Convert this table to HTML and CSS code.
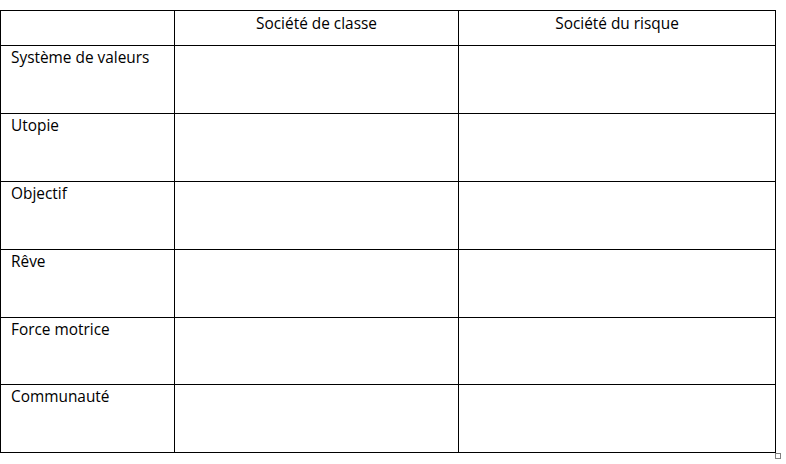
FILE: index.html
```html
<!DOCTYPE html>
<html lang="fr">
<head>
<meta charset="utf-8">
<link rel="stylesheet" href="styles.css">
</head>
<body>
<div class="page">
  <table class="grid">
    <colgroup>
      <col class="c1"><col class="c2"><col class="c3">
    </colgroup>
    <tr class="head">
      <td></td>
      <td class="center">Société de classe</td>
      <td class="center">Société du risque</td>
    </tr>
    <tr><td>Système de valeurs</td><td></td><td></td></tr>
    <tr><td>Utopie</td><td></td><td></td></tr>
    <tr><td>Objectif</td><td></td><td></td></tr>
    <tr><td>Rêve</td><td></td><td></td></tr>
    <tr class="short"><td>Force motrice</td><td></td><td></td></tr>
    <tr><td>Communauté</td><td></td><td></td></tr>
  </table>
  <div class="handle"></div>
</div>
</body>
</html>
```
FILE: styles.css
```css
html, body {
  margin: 0;
  padding: 0;
  background: #ffffff;
}
.page {
  padding: 10px 0 0 0;
  font-family: "Open Sans", "Liberation Sans", sans-serif;
  font-size: 15.4px;
  color: #000;
}
.grid {
  border-collapse: collapse;
  table-layout: fixed;
  width: 775px;
}
.c1 { width: 174px; }
.c2 { width: 284px; }
.c3 { width: 317px; }
.grid td {
  border: 1px solid #000;
  height: 68px;
  padding: 2px 10px 0 10px;
  vertical-align: top;
  line-height: 20px;
  box-sizing: border-box;
}
.grid tr.head td {
  height: 35px;
  padding-top: 3px;
}
.grid tr.short td {
  height: 67px;
}
.grid td.center {
  text-align: center;
}
.handle {
  margin: 0 0 0 775px;
  width: 4px;
  height: 4px;
  border: 1px solid #808080;
  background: #fff;
}
```
